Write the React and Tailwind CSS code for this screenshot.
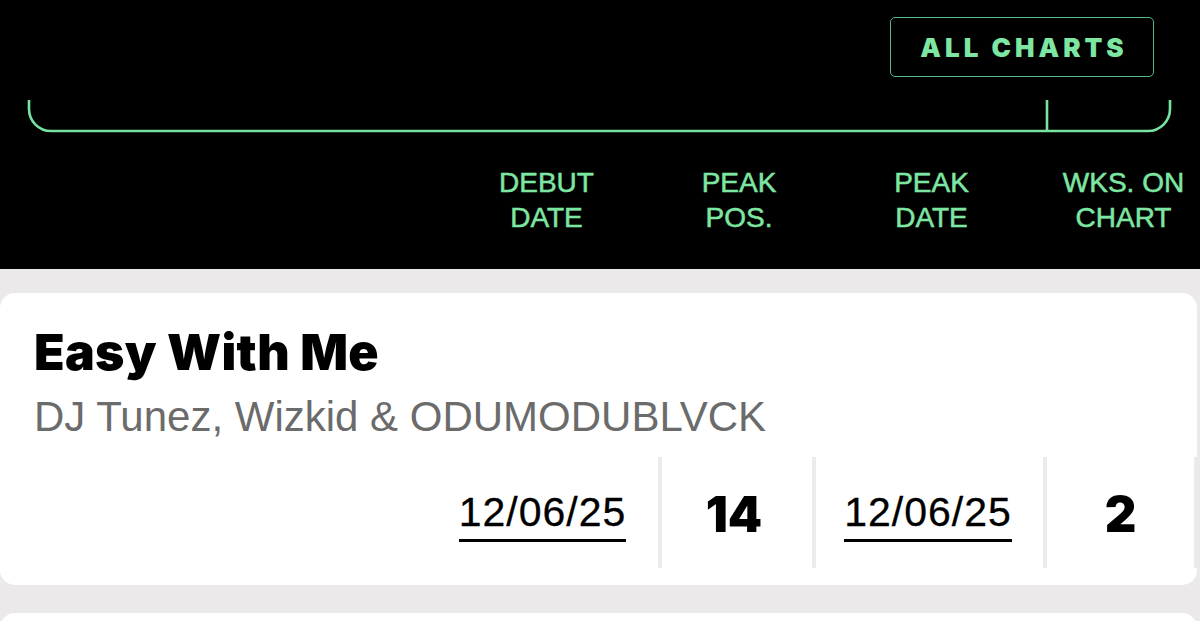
import React from 'react';

const headers = [
  { top: 'DEBUT', bottom: 'DATE', w: 'w-[231px]' },
  { top: 'PEAK', bottom: 'POS.', w: 'w-[154px]' },
  { top: 'PEAK', bottom: 'DATE', w: 'w-[231px]' },
  { top: 'WKS. ON', bottom: 'CHART', w: 'w-[153px]' },
];

const Bracket = () => (
  <svg width="1200" height="36" viewBox="0 0 1200 36" className="block" fill="none">
    <path
      d="M29 2 V11 A22 22 0 0 0 51 33 H1148 A22 22 0 0 0 1170 11 V2"
      stroke="#78e3a0"
      strokeWidth="2.6"
    />
    <path d="M1047 2 V33" stroke="#78e3a0" strokeWidth="2.6" />
  </svg>
);

const App = () => {
  const song = {
    title: 'Easy With Me',
    artist: 'DJ Tunez, Wizkid & ODUMODUBLVCK',
    debut: '12/06/25',
    peak: '14',
    peakDate: '12/06/25',
    weeks: '2',
  };

  return (
    <div className="w-[1200px] h-[621px] overflow-hidden bg-[#ebe9ea] font-['Liberation_Sans',Arial,sans-serif]">
      {/* header */}
      <div className="bg-black pt-[17px] pb-[34px]">
        <div className="flex justify-end pr-[46px]">
          <button className="w-[264px] h-[60px] rounded-[5px] border-[1.5px] border-[#56b884] flex items-center justify-center font-['Inter',sans-serif] text-[26px] font-black tracking-[4px] pl-[4px] text-[#7ee6a3]">
            ALL CHARTS
          </button>
        </div>
        <div className="mt-[21px]">
          <Bracket />
        </div>
        <div className="mt-[31px] flex justify-end">
          {headers.map((h, i) => (
            <div key={i} className={`${h.w} flex flex-col items-center text-[28px] leading-[35px] text-[#7ee6a3] [-webkit-text-stroke:0.5px_#7ee6a3]`}>
              <span>{h.top}</span>
              <span>{h.bottom}</span>
            </div>
          ))}
        </div>
      </div>

      {/* chart rows */}
      <div className="pt-[24px] pr-[3px] flex flex-col gap-[28px]">
        <div className="bg-white rounded-[15px] pt-[34px] pb-[17px]">
          <div className="pl-[34px]">
            <h2 className="font-['Inter',sans-serif] text-[50px] leading-[51px] font-black tracking-[0.3px] text-black">{song.title}</h2>
            <p className="mt-[18px] text-[42px] leading-[42px] text-[#6b6b6b]">{song.artist}</p>
          </div>
          <div className="mt-[19px] flex justify-end h-[111px]">
            <div className="w-[235px] border-r-4 border-[#ebebeb] flex justify-center pt-[35px]">
              <span className="text-[41px] leading-[41px] tracking-[1px] text-black [-webkit-text-stroke:0.3px_#000] border-b-[3px] border-black pb-[6px] h-fit">
                {song.debut}
              </span>
            </div>
            <div className="w-[154px] border-r-4 border-[#ebebeb] flex justify-center pt-[33px] pr-[6px]">
              <span className="font-['Inter',sans-serif] text-[49px] leading-[49px] font-black text-black">{song.peak}</span>
            </div>
            <div className="w-[231px] border-r-4 border-[#ebebeb] flex justify-center pt-[35px] pr-[3px]">
              <span className="text-[41px] leading-[41px] tracking-[1px] text-black [-webkit-text-stroke:0.3px_#000] border-b-[3px] border-black pb-[6px] h-fit">
                {song.peakDate}
              </span>
            </div>
            <div className="w-[150px] border-r-[3px] border-[#ebebeb] flex justify-center pt-[33px]">
              <span className="font-['Inter',sans-serif] text-[49px] leading-[49px] font-black text-black">{song.weeks}</span>
            </div>
          </div>
        </div>
        <div className="bg-white rounded-[15px] h-[100px]"></div>
      </div>
    </div>
  );
};

export default App;
